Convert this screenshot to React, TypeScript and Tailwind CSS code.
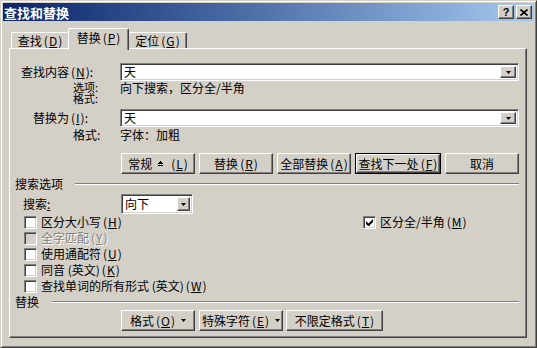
import type { ReactNode } from 'react';

const raised =
  'border border-t-white border-l-white border-r-[#404040] border-b-[#404040] shadow-[inset_-1px_-1px_0_#808080]';
const sunken =
  'border border-t-[#808080] border-l-[#808080] border-r-white border-b-white shadow-[inset_1px_1px_0_#404040,inset_-1px_-1px_0_#d4d0c8]';

function Key({ k }: { k: string }) {
  return (
    <span className="ml-[2px]">
      (<u className="px-[1px] underline-offset-[1px]">{k}</u>)
    </span>
  );
}

function DownArrow({ w = 5 }: { w?: number }) {
  return (
    <svg width={w} height={Math.ceil(w / 2)} viewBox={`0 0 ${w} ${Math.ceil(w / 2)}`}>
      <path d={`M0 0h${w}L${w / 2} ${Math.ceil(w / 2)}z`} fill="#000" />
    </svg>
  );
}

function DropBtn({ className = '' }: { className?: string }) {
  return (
    <div className={`flex items-center justify-center bg-[#d4d0c8] ${raised} ${className}`}>
      <DownArrow />
    </div>
  );
}

function Combo({ value, width }: { value: string; width: string }) {
  return (
    <div className={`flex h-[18px] items-stretch bg-white p-[2px] ${sunken} ${width}`}>
      <span className="flex flex-1 items-center pl-[1px] text-[12px]">{value}</span>
      <DropBtn className="w-[16px]" />
    </div>
  );
}

function Btn({
  children,
  width,
  primary,
}: {
  children: ReactNode;
  width: string;
  primary?: boolean;
}) {
  if (primary) {
    return (
      <div className={`h-[21px] border border-black ${width}`}>
        <div className={`flex h-full items-center justify-center ${raised}`}>{children}</div>
      </div>
    );
  }
  return (
    <div className={`flex h-[21px] items-center justify-center ${raised} ${width}`}>{children}</div>
  );
}

function Check({
  label,
  checked,
  disabled,
}: {
  label: ReactNode;
  checked?: boolean;
  disabled?: boolean;
}) {
  return (
    <div className="flex h-[16px] items-center gap-[4px]">
      <div
        className={`flex h-[13px] w-[13px] items-center justify-center ${sunken} ${
          disabled ? 'bg-[#d4d0c8]' : 'bg-white'
        }`}
      >
        {checked && (
          <svg width="7" height="7" viewBox="0 0 7 7">
            <path d="M0 2v3l2 2h1l4-4V0L2.5 4.5z" fill="#000" />
          </svg>
        )}
      </div>
      <span
        className={
          disabled ? 'text-[#808080] [text-shadow:1px_1px_0_#fff]' : 'text-black'
        }
      >
        {label}
      </span>
    </div>
  );
}

function Group({ title, gap }: { title: string; gap: string }) {
  return (
    <div className="flex h-[12px] items-center pl-[5px] pr-[7px]">
      <span>{title}</span>
      <div className={`h-[2px] flex-1 border-t border-t-[#808080] border-b border-b-white ${gap}`} />
    </div>
  );
}

export default function App() {
  return (
    <div className="h-[348px] w-[537px] overflow-hidden bg-[#d4d0c8] font-['Noto_Sans_CJK_SC',sans-serif] text-[12px] leading-none text-black">
      <div className="h-full border border-t-[#d4d0c8] border-l-[#d4d0c8] border-r-[#404040] border-b-[#404040] p-[2px] shadow-[inset_1px_1px_0_#fff,inset_-1px_-1px_0_#808080]">
        {/* title bar */}
        <div className="flex h-[18px] items-center bg-gradient-to-r from-[#0a246a] to-[#a6caf0] pl-[1px] pr-[2px]">
          <span className="flex-1 text-[13px] font-bold text-white">查找和替换</span>
          <div className={`flex h-[14px] w-[16px] items-center justify-center bg-[#d4d0c8] ${raised}`}>
            <span className="font-['Liberation_Sans',sans-serif] text-[11px] font-bold">?</span>
          </div>
          <div
            className={`ml-[2px] flex h-[14px] w-[16px] items-center justify-center bg-[#d4d0c8] ${raised}`}
          >
            <svg width="8" height="7" viewBox="0 0 8 7">
              <path d="M0.5 0.5l7 6M7.5 0.5l-7 6" stroke="#000" strokeWidth="1.6" />
            </svg>
          </div>
        </div>

        <div className="pl-[6px] pr-[7px]">
          {/* tabs */}
          <div className="mt-[7px] flex h-[20px] items-end pl-[2px]">
            <div className="flex h-[16px] w-[57px] items-center justify-center rounded-t-[2px] border-t border-l border-t-white border-l-white pt-[1px]">
              查找<Key k="D" />
            </div>
            <div className="relative z-10 -mb-[2px] flex h-[22px] w-[61px] items-start justify-center rounded-t-[2px] border-t border-l border-r border-t-white border-l-white border-r-[#404040] bg-[#d4d0c8] pt-[3px] shadow-[inset_-1px_0_0_#808080]">
              替换<Key k="P" />
            </div>
            <div className="flex h-[16px] w-[58px] items-center justify-center rounded-t-[2px] border-t border-r border-t-white border-r-[#404040] pt-[1px] shadow-[inset_-1px_0_0_#808080]">
              定位<Key k="G" />
            </div>
          </div>

          {/* panel */}
          <div className={`flex h-[290px] flex-col ${raised}`}>
            <div className="mt-[14px] flex h-[18px] items-center">
              <span className="w-[110px] pl-[11px]">
                查找内容<Key k="N" />:
              </span>
              <Combo value="天" width="w-[399px]" />
            </div>
            <div className="mt-[1px] flex h-[22px] items-start">
              <span className="w-[110px] whitespace-pre-line pl-[63px] text-[11px] leading-[11px]">
                {'选项:\n格式:'}
              </span>
              <span className="leading-[11px]">向下搜索，区分全/半角</span>
            </div>
            <div className="mt-[5px] flex h-[18px] items-center">
              <span className="w-[110px] pl-[23px]">
                替换为<Key k="I" />:
              </span>
              <Combo value="天" width="w-[399px]" />
            </div>
            <div className="mt-[2px] flex h-[12px] items-center">
              <span className="w-[110px] pl-[63px]">格式:</span>
              <span>字体：加粗</span>
            </div>

            <div className="mt-[12px] flex gap-[4px] pl-[111px]">
              <Btn width="w-[74px]">
                常规
                <svg className="mx-[6px]" width="5" height="6" viewBox="0 0 5 6">
                  <path d="M2 0h1v1H2zM1 1h3v1H1zM0 2h5v1H0zM0 4h5v1H0z" fill="#000" />
                </svg>
                <Key k="L" />
              </Btn>
              <Btn width="w-[74px]">
                替换<Key k="R" />
              </Btn>
              <Btn width="w-[74px]">
                全部替换<Key k="A" />
              </Btn>
              <Btn width="w-[86px]" primary>
                查找下一处<Key k="F" />
              </Btn>
              <Btn width="w-[74px]">取消</Btn>
            </div>

            <div className="mt-[4px]">
              <Group title="搜索选项" gap="ml-[12px]" />
            </div>

            <div className="mt-[4px] flex h-[20px] items-center">
              <span className="w-[111px] pl-[13px]">
                搜索<u className="underline-offset-[1px]">:</u>
              </span>
              <div className={`flex h-[20px] w-[72px] items-stretch bg-white p-[2px] ${sunken}`}>
                <span className="flex flex-1 items-center pl-[1px]">向下</span>
                <DropBtn className="w-[13px]" />
              </div>
            </div>

            <div className="flex flex-col pl-[14px]">
              <div className="flex">
                <div className="w-[339px]">
                  <Check
                    label={
                      <>
                        区分大小写<Key k="H" />
                      </>
                    }
                  />
                </div>
                <Check
                  checked
                  label={
                    <>
                      区分全/半角<Key k="M" />
                    </>
                  }
                />
              </div>
              <Check
                disabled
                label={
                  <>
                    全字匹配<Key k="Y" />
                  </>
                }
              />
              <Check
                label={
                  <>
                    使用通配符<Key k="U" />
                  </>
                }
              />
              <Check
                label={
                  <>
                    同音 (英文)<Key k="K" />
                  </>
                }
              />
              <Check
                label={
                  <>
                    查找单词的所有形式 (英文)<Key k="W" />
                  </>
                }
              />
            </div>

            <div className="mt-[2px]">
              <Group title="替换" gap="ml-[13px]" />
            </div>

            <div className="mt-[2px] flex pl-[111px]">
              <Btn width="w-[74px]">
                格式<Key k="O" />
                <span className="ml-[6px]">
                  <DownArrow />
                </span>
              </Btn>
              <div className="ml-[4px]">
                <Btn width="w-[84px]">
                  特殊字符<Key k="E" />
                  <span className="ml-[6px]">
                    <DownArrow />
                  </span>
                </Btn>
              </div>
              <div className="ml-[3px]">
                <Btn width="w-[97px]">
                  不限定格式<Key k="T" />
                </Btn>
              </div>
            </div>
          </div>
        </div>
      </div>
    </div>
  );
}
